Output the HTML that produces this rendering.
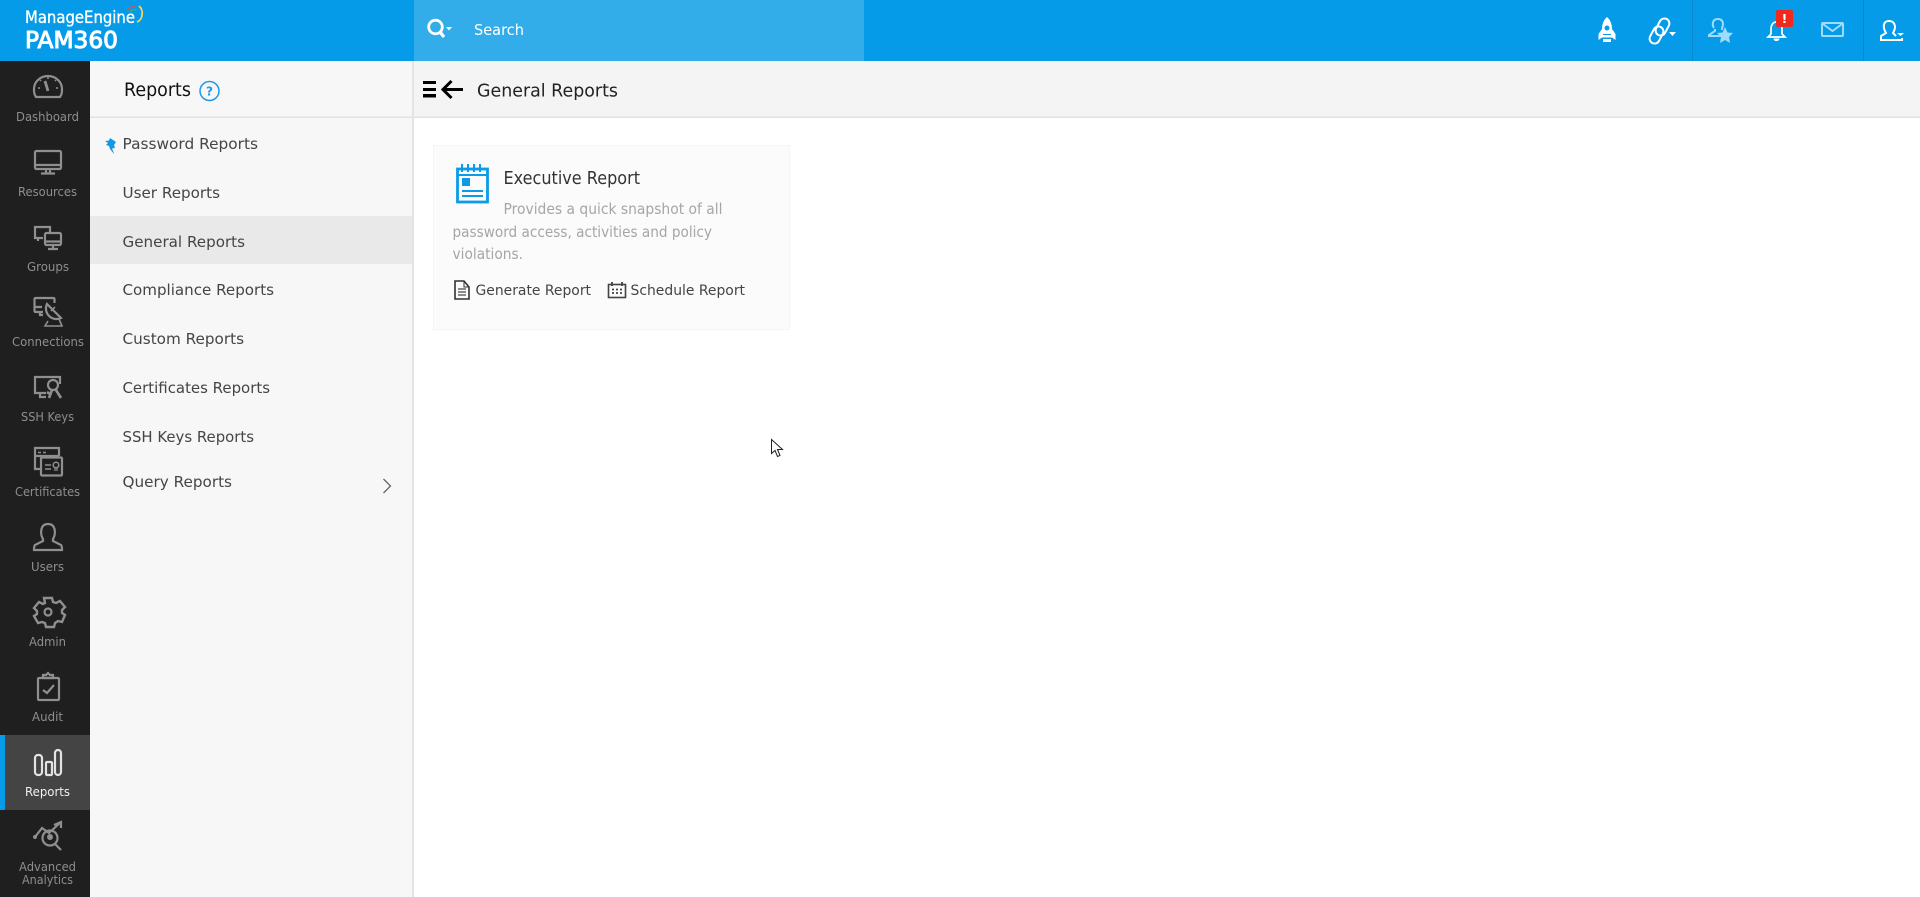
<!DOCTYPE html>
<html lang="en">
<head>
<meta charset="utf-8">
<title>PAM360 - General Reports</title>
<style>
html,body{margin:0;padding:0;background:#fff;width:1920px;height:897px;overflow:hidden}
svg{display:block}
text{font-family:"DejaVu Sans","Liberation Sans",sans-serif}
.nl{font-size:12.500px;fill:#8e8e8e}
.m{font-size:15.500px;fill:#454545}
.d{font-size:15px;fill:#a6a6a6}
.a{font-size:14.500px;fill:#444}
.i{fill:none;stroke:#8f8f8f;stroke-width:2.200}
.w{fill:none;stroke:#fff;stroke-width:2}
.l{fill:none;stroke:#9fdcfb;stroke-width:2}
</style>
</head>
<body>
<svg width="1920" height="897" viewBox="0 0 1920 897" xmlns="http://www.w3.org/2000/svg">
<!-- backgrounds -->
<rect width="1920" height="897" fill="#fff"/>
<rect x="90" y="61" width="322" height="836" fill="#f7f7f7"/>
<rect x="412" y="61" width="2" height="836" fill="#e4e4e4"/>
<rect x="414" y="61" width="1506" height="56" fill="#f4f4f4"/>
<rect x="90" y="116.500" width="322" height="1.500" fill="#e2e2e2"/>
<rect x="414" y="116.500" width="1506" height="1.500" fill="#e2e2e2"/>
<rect y="0" width="1920" height="61" fill="#059be8"/>
<rect x="414" y="0" width="450" height="61" fill="#33ade9"/>
<rect y="61" width="90" height="836" fill="#1f1f1f"/>
<rect y="735" width="90" height="75" fill="#444"/>
<rect y="735" width="5" height="75" fill="#059be8"/>
<rect x="90" y="216" width="322" height="48" fill="#e9e9e9"/>

<!-- logo -->
<text x="25" y="23" font-size="16.500" fill="#fff" stroke="#fff" stroke-width=".35" textLength="110" lengthAdjust="spacingAndGlyphs">ManageEngine</text>
<path d="M127 10 a10 10 0 0 1 9 -3" fill="none" stroke="#d9534f" stroke-width="1.400"/>
<path d="M129 12 a8 8 0 0 1 7 -2" fill="none" stroke="#3fae6a" stroke-width="1.400"/>
<path d="M139 6 a9 9 0 0 1 3 9 a8 8 0 0 1 -5 7" fill="none" stroke="#f4d35e" stroke-width="1.800"/>
<text x="25" y="48" font-size="23" fill="#fff" stroke="#fff" stroke-width="1" textLength="93" lengthAdjust="spacingAndGlyphs">PAM360</text>

<!-- search -->
<circle cx="435.500" cy="27" r="6.800" fill="none" stroke="#fff" stroke-width="2.800"/>
<path d="M440 32l4 5" stroke="#fff" stroke-width="3.200" fill="none"/>
<path d="M446 27h6l-3 3.500z" fill="#fff"/>
<text x="474" y="35" font-size="15.500" fill="#fff" textLength="50" lengthAdjust="spacingAndGlyphs">Search</text>

<!-- top-right icons -->
<path d="M1607 17c-3.500 3-5 7.500-5 12l-3.500 5v6l3.500-2.500h10l3.500 2.500v-6l-3.500-5c0-4.500-1.500-9-5-12z" fill="#fff"/>
<rect x="1603" y="39" width="8" height="3" fill="#fff"/>
<circle cx="1607" cy="28" r="2.500" fill="#059be8"/>
<path d="M1603 34.500h8" stroke="#059be8" stroke-width="1"/>
<g class="w" stroke-width="1.900">
<rect x="1657.500" y="18" width="10" height="18" rx="5" transform="rotate(28 1662.500 27)"/>
<rect x="1651.500" y="26" width="10" height="18" rx="5" transform="rotate(28 1656.500 35)"/>
</g>
<path d="M1669 32h7l-3.500 4z" fill="#fff"/>
<rect x="1692" y="0" width="1" height="61" fill="#0a88cc"/>
<rect x="1863" y="0" width="1" height="61" fill="#0a88cc"/>
<g class="l">
<path d="M1714 28c-2-3-2-9 4-9 5 0 6 5 4 9v2"/>
<path d="M1715 29v2l-6 4v1h14"/>
</g>
<path d="M1725 27l2.500 5.500 5.500.5-4 4 1 6-5-3-5 3 1-6-4-4 5.500-.5z" fill="#9fdcfb"/>
<path d="M1771 34v-5c0-4 2-7 5.500-7s5.500 3 5.500 7v5l3 3h-17z" fill="none" stroke="#fff" stroke-width="1.700"/>
<path d="M1773.500 38.500c0 1.500 1 2.500 3 2.500s3-1 3-2.500z" fill="#fff"/>
<rect x="1776" y="10" width="17" height="17" rx="2" fill="#f0291f"/>
<text x="1784.500" y="23" font-size="12.500" font-weight="bold" fill="#fff" text-anchor="middle">!</text>
<g class="l">
<rect x="1822" y="23" width="21" height="13" rx="1"/>
<path d="M1823 24l9.500 7 9.500-7"/>
</g>
<g class="w">
<path d="M1885 31c-2-4-2-10 4-10s7 6 5 10l-1 2 3 3"/>
<path d="M1885 31l1 2-5 3v4h21v-2"/>
</g>
<path d="M1897 33h7l-3.500 3z" fill="#fff"/>

<!-- nav icons -->
<g class="i">
<!-- dashboard -->
<path d="M36 97c-2-3-2-5-2-8a14 13 0 0 1 28 0c0 3 0 5-2 8z"/>
<path d="M45 81l3 10" stroke-width="2.800"/>
<path d="M48 77v2M38 88h2M56 88h2M40 80l1 1M56 80l-1 1" stroke-width="1.500"/>
<!-- resources -->
<rect x="35" y="151" width="26" height="18" rx="1.500"/>
<path d="M35 165h26M46 169v4M50 169v4M41 173.500h14"/>
<!-- groups -->
<path d="M43 238h-8v-11h15v5"/>
<path d="M38 238v3"/>
<rect x="45" y="233" width="16" height="12" rx="1.500"/>
<path d="M45 241.500h16M53 245v3M48 249h10"/>
<!-- connections -->
<path d="M43 312h-7.500c-.500 0-1-.500-1-1v-12c0-.500.500-1 1-1h18c.500 0 1 .500 1 1v4"/>
<path d="M35 307h7M40 312v3h3"/>
<path d="M47 304a10.500 10.500 0 0 0 14 14z"/>
<path d="M48 321l-3 5h17l-3-7M51 311l4-4" stroke-width="1.600"/>
<!-- ssh -->
<path d="M46 393h-11v-16h25v7"/>
<path d="M40 393v4h6"/>
<circle cx="53" cy="385" r="5"/>
<path d="M49 398l3-8M61 398l-5-8M47 392l3 2" stroke-width="2.600"/>
<!-- certificates -->
<path d="M40 469h-5v-21h24v8"/>
<path d="M35 456h24"/>
<path d="M38 452.500h3M43 452.500h3" stroke-width="1.500"/>
<rect x="41" y="457.500" width="21" height="18" rx="1" fill="#1f1f1f"/>
<path d="M45 465h6M45 469h6" stroke-width="1.500"/>
<circle cx="56" cy="465" r="2.800" stroke-width="1.500"/>
<path d="M55 468v3M57 468v3" stroke-width="1.200"/>
<!-- users -->
<path d="M43 539c-3-5-3-15 5-15s8 10 5 15v2l8 4c1 1 1 3 1 5h-28c0-2 0-4 1-5l8-4z"/>
<!-- admin -->
<path d="M44 598h8l1 4 3 1 4-2 5 6-3 3v3l3 2-3 7-4-1-3 2-1 4h-8l-1-4-3-1-4 1-4-7 3-2v-3l-3-3 5-6 4 2 2-1z" stroke-width="2.400"/>
<circle cx="48" cy="612" r="3.500"/>
<!-- audit -->
<rect x="38" y="678" width="21" height="22" rx="1"/>
<path d="M43 678v-3h3l2-2 2 2h3v3z"/>
<path d="M43 690l4 3 7-8"/>
<!-- analytics -->
<path d="M35 837l7-9 7 5 12-11"/>
<path d="M54 825l7-3v6"/>
<circle cx="50" cy="838" r="7.500"/>
<path d="M55 844l6 6"/>
</g>
<g fill="none" stroke="#e3e3e3" stroke-width="2.200">
<rect x="35" y="755" width="7" height="20" rx="3"/>
<rect x="46" y="762" width="6" height="13" rx="1"/>
<rect x="55" y="750" width="6" height="25" rx="3"/>
</g>
<circle cx="35" cy="837" r="2" fill="#8f8f8f"/>
<circle cx="50" cy="837" r="3" fill="#8f8f8f"/>

<!-- nav labels -->
<text class="nl" x="16" y="121" textLength="63" lengthAdjust="spacingAndGlyphs">Dashboard</text>
<text class="nl" x="18" y="196" textLength="59" lengthAdjust="spacingAndGlyphs">Resources</text>
<text class="nl" x="27" y="271" textLength="42" lengthAdjust="spacingAndGlyphs">Groups</text>
<text class="nl" x="12" y="346" textLength="72" lengthAdjust="spacingAndGlyphs">Connections</text>
<text class="nl" x="21" y="421" textLength="53" lengthAdjust="spacingAndGlyphs">SSH Keys</text>
<text class="nl" x="15" y="496" textLength="65" lengthAdjust="spacingAndGlyphs">Certificates</text>
<text class="nl" x="31" y="571" textLength="33" lengthAdjust="spacingAndGlyphs">Users</text>
<text class="nl" x="29" y="646" textLength="37" lengthAdjust="spacingAndGlyphs">Admin</text>
<text class="nl" x="32" y="721" textLength="31" lengthAdjust="spacingAndGlyphs">Audit</text>
<text class="nl" x="25" y="796" style="fill:#f0f0f0" textLength="45" lengthAdjust="spacingAndGlyphs">Reports</text>
<text class="nl" x="19" y="871" textLength="57" lengthAdjust="spacingAndGlyphs">Advanced</text>
<text class="nl" x="22" y="884" textLength="51" lengthAdjust="spacingAndGlyphs">Analytics</text>

<!-- sub panel -->
<text x="124" y="96" font-size="19" fill="#111" textLength="67" lengthAdjust="spacingAndGlyphs">Reports</text>
<circle cx="209.500" cy="91" r="9.500" fill="none" stroke="#1e9be6" stroke-width="1.500"/>
<text x="209.500" y="95.500" font-size="12" font-weight="bold" fill="#1e9be6" text-anchor="middle">?</text>
<path d="M105 141l4-.5 1-2.500 3 2 3 2-2 3 1 3-3 .5 2.500 6-4.500-5.500-1-3-3-1 2-2z" fill="#0f9ae6"/>

<text class="m" x="122.500" y="149" textLength="135.500" lengthAdjust="spacingAndGlyphs">Password Reports</text>
<text class="m" x="122.500" y="198" textLength="97.500" lengthAdjust="spacingAndGlyphs">User Reports</text>
<text class="m" x="122.500" y="247" textLength="122.500" lengthAdjust="spacingAndGlyphs">General Reports</text>
<text class="m" x="122.500" y="295" textLength="151.500" lengthAdjust="spacingAndGlyphs">Compliance Reports</text>
<text class="m" x="122.500" y="344" textLength="121.500" lengthAdjust="spacingAndGlyphs">Custom Reports</text>
<text class="m" x="122.500" y="393" textLength="147.500" lengthAdjust="spacingAndGlyphs">Certificates Reports</text>
<text class="m" x="122.500" y="442" textLength="131.500" lengthAdjust="spacingAndGlyphs">SSH Keys Reports</text>
<text class="m" x="122.500" y="487" textLength="109.500" lengthAdjust="spacingAndGlyphs">Query Reports</text>
<path d="M383.500 479l7 7-7 7" fill="none" stroke="#666" stroke-width="1.300"/>

<!-- content header -->
<rect x="423" y="81" width="13" height="3" fill="#000"/>
<rect x="423" y="88" width="13" height="3" fill="#000"/>
<rect x="423" y="94" width="13" height="3.500" fill="#000"/>
<path d="M463 89.500h-18M451.500 81l-8.500 8.500 8.500 8.500" fill="none" stroke="#000" stroke-width="3"/>
<text x="477" y="96.500" font-size="18" fill="#222" textLength="141" lengthAdjust="spacingAndGlyphs">General Reports</text>

<!-- card -->
<rect x="433.500" y="145.500" width="356" height="184" fill="#fbfbfb" stroke="#f5f5f5"/>
<rect x="457.500" y="169" width="30" height="33" fill="none" stroke="#0d9be8" stroke-width="2.800"/>
<path d="M457 175h31" stroke="#0d9be8" stroke-width="2"/>
<path d="M462 164v8M468 164v8M474 164v8M480 164v8" stroke="#0d9be8" stroke-width="2"/>
<rect x="462" y="178" width="8" height="8" fill="#0d9be8"/>
<path d="M462 191h21M462 196h21" stroke="#0d9be8" stroke-width="2"/>
<text x="503.500" y="184" font-size="18" fill="#333" textLength="136.500" lengthAdjust="spacingAndGlyphs">Executive Report</text>
<text class="d" x="503.500" y="214" textLength="219" lengthAdjust="spacingAndGlyphs">Provides a quick snapshot of all</text>
<text class="d" x="452.500" y="237" textLength="259.500" lengthAdjust="spacingAndGlyphs">password access, activities and policy</text>
<text class="d" x="452.500" y="259" textLength="70.500" lengthAdjust="spacingAndGlyphs">violations.</text>

<path d="M455 281h9l5 6v12h-14z" fill="none" stroke="#333" stroke-width="1.600"/>
<path d="M464 281v6h5" fill="none" stroke="#333" stroke-width="1"/>
<path d="M458 289h8M458 292h8M458 295h8" stroke="#666" stroke-width="1.400"/>
<text class="a" x="475.500" y="295" textLength="115.500" lengthAdjust="spacingAndGlyphs">Generate Report</text>
<rect x="608.500" y="284.500" width="17" height="13" fill="none" stroke="#444" stroke-width="1.600"/>
<path d="M612 282v4M622 282v4M612 289.500h2M616 289.500h2M620 289.500h2M612 293h2M616 293h2M620 293h2" stroke="#444" stroke-width="1.800"/>
<text class="a" x="630.500" y="295" textLength="114.500" lengthAdjust="spacingAndGlyphs">Schedule Report</text>

<!-- cursor -->
<path d="M771.500 439.500v14l3.500-3 2.500 6 2.500-1-2.500-6h5z" fill="#fff" stroke="#222" stroke-width="1"/>
</svg>
</body>
</html>
